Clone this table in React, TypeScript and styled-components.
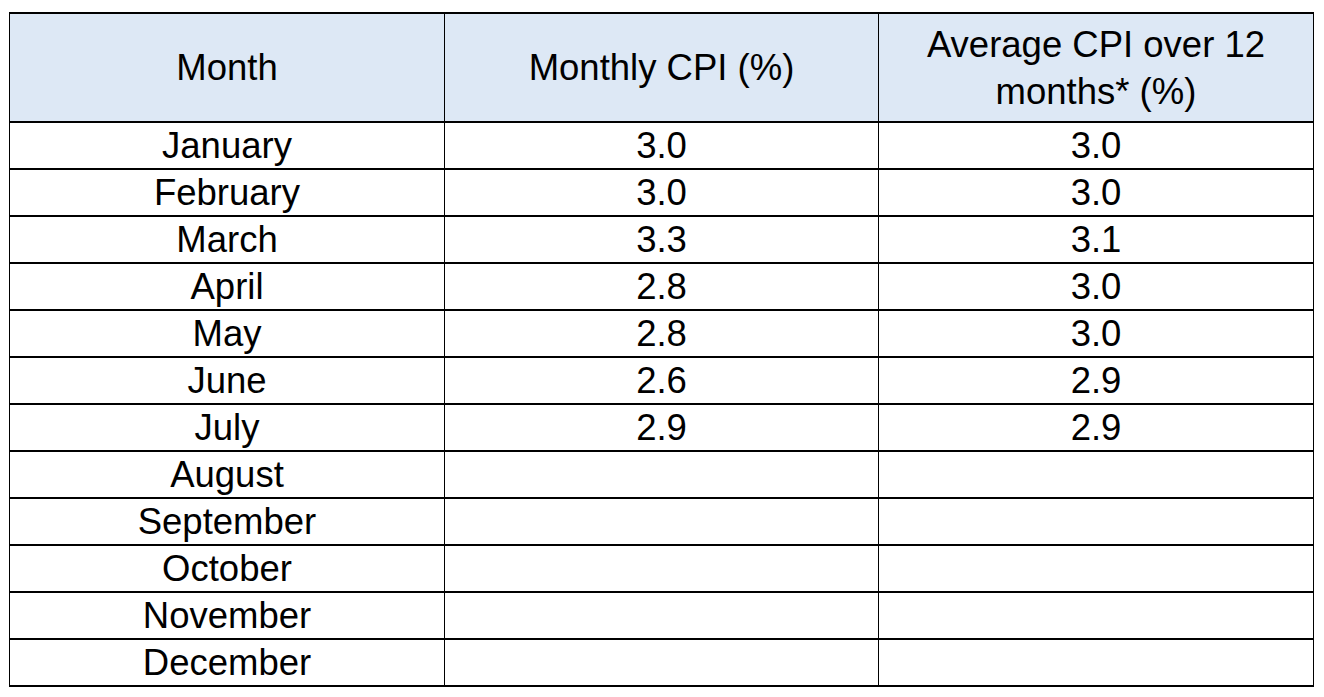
import React from "react";
import styled, { createGlobalStyle } from "styled-components";

const GlobalStyle = createGlobalStyle`
  html, body {
    margin: 0;
    padding: 0;
    background: #ffffff;
  }
  body {
    font-family: "Liberation Sans", Arial, sans-serif;
    color: #000000;
  }
`;

const Page = styled.div`
  padding: 12px 0 0 9px;
`;

const Table = styled.div`
  display: grid;
  grid-template-columns: 435px 434px 435px;
  width: 1305px;
  border-top: 2px solid #000;
  border-left: 1px solid #000;
  box-sizing: border-box;
`;

const Cell = styled.div<{ $header?: boolean }>`
  box-sizing: border-box;
  height: ${(p) => (p.$header ? "109px" : "47px")};
  border-right: 1px solid #000;
  border-bottom: 2px solid #000;
  background: ${(p) => (p.$header ? "#DDE8F5" : "#ffffff")};
  display: flex;
  align-items: center;
  justify-content: center;
  text-align: center;
  font-size: 36.5px;
  line-height: ${(p) => (p.$header ? "47px" : "44px")};
  white-space: nowrap;
`;

const rows: [string, string, string][] = [
  ["January", "3.0", "3.0"],
  ["February", "3.0", "3.0"],
  ["March", "3.3", "3.1"],
  ["April", "2.8", "3.0"],
  ["May", "2.8", "3.0"],
  ["June", "2.6", "2.9"],
  ["July", "2.9", "2.9"],
  ["August", "", ""],
  ["September", "", ""],
  ["October", "", ""],
  ["November", "", ""],
  ["December", "", ""],
];

export default function App() {
  return (
    <>
      <GlobalStyle />
      <Page>
        <Table>
          <Cell $header>Month</Cell>
          <Cell $header>Monthly CPI (%)</Cell>
          <Cell $header>
            Average CPI over 12
            <br />
            months* (%)
          </Cell>
          {rows.map(([m, a, b]) => (
            <React.Fragment key={m}>
              <Cell>{m}</Cell>
              <Cell>{a}</Cell>
              <Cell>{b}</Cell>
            </React.Fragment>
          ))}
        </Table>
      </Page>
    </>
  );
}
